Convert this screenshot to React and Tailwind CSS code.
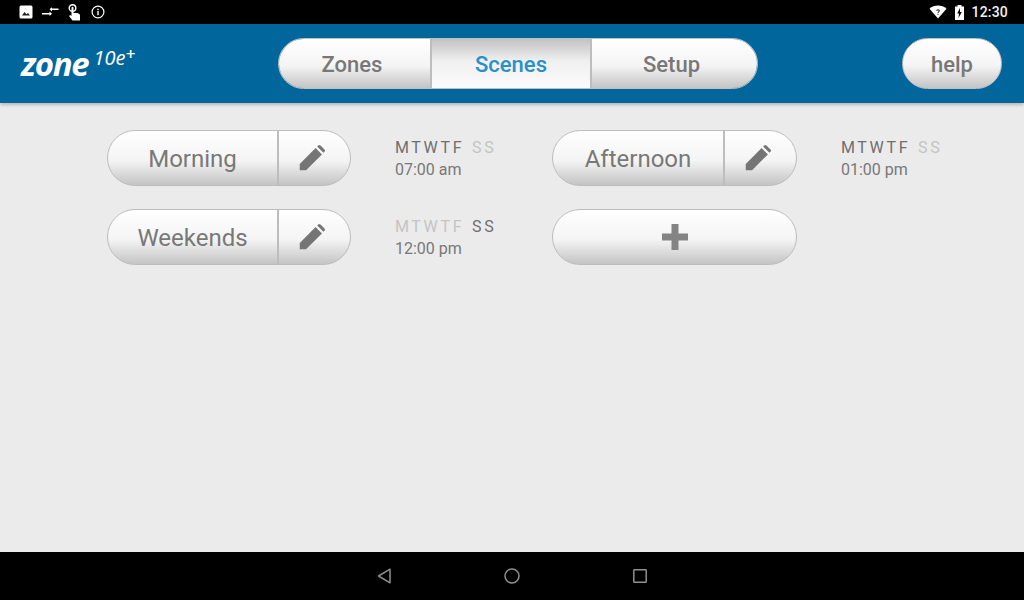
import React from "react";

const FONT = "font-['Roboto','Liberation_Sans',sans-serif]";
const pill = "bg-gradient-to-b from-[#ffffff] via-[#f4f4f4] via-55% to-[#c4c4c4]";

function Pencil() {
  return (
    <svg width="28" height="28" viewBox="0 0 24 24" fill="#757575">
      <path d="M1.500 22.500v-5.400l13.600-13.600 5.400 5.400L6.900 22.500z" />
      <path d="M16.400 2.200l.9-.9a1.400 1.400 0 0 1 2 0l3.400 3.400a1.400 1.400 0 0 1 0 2l-.9.9z" />
    </svg>
  );
}

function Days({ on }) {
  const wk = on === "week" ? "text-[#6f6f6f]" : "text-[#c4c4c4]";
  const we = on === "weekend" ? "text-[#6f6f6f]" : "text-[#c4c4c4]";
  return (
    <div className="flex text-[16px] leading-[20px] tracking-[2.6px]">
      <span className={wk}>MTWTF</span>
      <span className={`${we} ml-[8px]`}>SS</span>
    </div>
  );
}

function Scene({ name, on, time, wide }) {
  return (
    <div className="flex items-start">
      <div className={`flex h-[56px] ${wide ? "w-[245px]" : "w-[244px]"} rounded-full border border-[#bdbdbd] overflow-hidden ${pill}`}>
        <div className={`${wide ? "w-[170px]" : "w-[169px]"} flex items-center justify-center pt-[1px] text-[24px] text-[#787878]`}>{name}</div>
        <div className="w-[2px] bg-[#bdbdbd]" />
        <div className="flex-1 flex items-center justify-center pr-[6px]"><Pencil /></div>
      </div>
      <div className="ml-[44px] pt-[8px]">
        <Days on={on} />
        <div className="text-[16px] leading-[22px] mt-[1px] text-[#787878]">{time}</div>
      </div>
    </div>
  );
}

export default function App() {
  return (
    <div className={`w-[1024px] h-[600px] flex flex-col bg-[#ebebeb] overflow-hidden ${FONT}`}>
      <div className="h-[24px] bg-black flex items-center text-white shrink-0 pl-[19px] pr-[16px]">
        <svg width="14" height="14" viewBox="0 0 14 14"><rect x="0.500" y="0.500" width="13" height="13" rx="1.500" fill="#fff" /><path d="M3 10.500l2.500-3.500 2 2.200L9 8l2 2.500z" fill="#222" /></svg>
        <svg className="ml-[9px]" width="17" height="14" viewBox="0 0 17 14" fill="#fff"><path d="M0 8h7.500V6.600l2.500 2.200-2.500 2.200V9.400H0z" /><path d="M16.500 3.500H10V2.200L7.500 4.300 10 6.400V5h6.500z" /></svg>
        <svg className="ml-[9px]" width="12" height="17" viewBox="0 0 12 17" fill="#fff">
          <circle cx="4.500" cy="4" r="3.300" fill="none" stroke="#fff" strokeWidth="1.400" />
          <path d="M3.500 3.800a1 1 0 0 1 2 0V9h1.500c2.500 0 5 .6 5 2.500V16.500H4.500L1 12l1.200-1 1.300 1z" />
        </svg>
        <svg className="ml-[11px]" width="14" height="14" viewBox="0 0 14 14"><circle cx="7" cy="7" r="5.900" fill="none" stroke="#fff" strokeWidth="1.200" /><rect x="6.300" y="6" width="1.400" height="4.200" fill="#fff" /><rect x="6.300" y="3.700" width="1.400" height="1.400" fill="#fff" /></svg>
        <div className="flex-1" />
        <svg width="18" height="14" viewBox="0 0 18 14"><path d="M0.500 3.700C5 -0.600 13 -0.600 17.500 3.700L9 13.500z" fill="#fff" /><path d="M9 4.200a1.700 1.700 0 0 0-1.700 1.700h1c0-.9 1.400-.9 1.400 0 0 .7-1.200.9-1.200 2.100h1c0-.9 1.300-1.200 1.300-2.200A1.700 1.700 0 0 0 9 4.200zM8.500 8.700h1v1h-1z" fill="#222" /></svg>
        <svg className="ml-[8px]" width="9" height="15" viewBox="0 0 9 15"><path d="M2.500 0h4v1.500H9V15H0V1.500h2.500z" fill="#fff" /><path d="M5 3L2.200 8.500H4L3.500 13 6.800 7H5z" fill="#000" /></svg>
        <span className="ml-[7px] text-[14px] font-medium tracking-[0.2px] text-[#f2f2f2]">12:30</span>
      </div>

      <header className="h-[79px] bg-[#01669c] shrink-0 flex items-center shadow-[0_2px_3px_rgba(0,0,0,0.22)] relative">
        <div className="w-[278px] pl-[21px] flex items-start text-white italic font-['Open_Sans',sans-serif] font-bold">
          <span className="text-[33px] leading-[36px] tracking-[-1.3px] mt-[1px]">zone</span>
          <span className="text-[20px] leading-[22px] ml-[5px] mt-[2px] font-normal">10e</span>
          <span className="text-[17px] leading-[16px] mt-[1px] font-semibold">+</span>
        </div>
        <nav className="flex h-[51px] w-[480px] rounded-full border border-[#c0c0c0] overflow-hidden text-[22px] font-medium text-[#787878]">
          <div className={`w-[151px] flex items-center justify-center pt-[1px] pr-[5px] ${pill}`}>Zones</div>
          <div className="w-[162px] flex items-center justify-center pt-[1px] border-x-2 border-[#bdbdbd] text-[#2a90c8] bg-gradient-to-b from-[#c2c2c2] via-[#f0f0f0] via-45% to-[#fbfbfb]">Scenes</div>
          <div className={`flex-1 flex items-center justify-center pt-[1px] pr-[6px] ${pill}`}>Setup</div>
        </nav>
        <div className={`ml-[144px] h-[51px] w-[100px] rounded-full border border-[#c0c0c0] flex items-center justify-center pt-[1px] text-[22px] font-medium text-[#787878] ${pill}`}>help</div>
      </header>

      <main className="flex-1 pl-[107px] pt-[27px] grid grid-cols-[445px_1fr] auto-rows-[56px] gap-y-[23px] content-start">
        <Scene name="Morning" on="week" time="07:00 am" />
        <Scene name="Afternoon" on="week" time="01:00 pm" wide />
        <Scene name="Weekends" on="weekend" time="12:00 pm" />
        <div className={`h-[56px] w-[245px] rounded-full border border-[#bdbdbd] flex items-center justify-center pb-[1px] ${pill}`}>
          <svg width="26" height="26" viewBox="0 0 26 26" fill="#848484"><path d="M9.500 0h7v9.500H26v7h-9.500V26h-7v-9.500H0v-7h9.500z" /></svg>
        </div>
      </main>

      <footer className="h-[48px] bg-black shrink-0 flex items-center justify-center relative">
        <div className="flex items-center">
          <svg width="14" height="16" viewBox="0 0 14 16" fill="none" stroke="#8f8f8f" strokeWidth="1.500"><path d="M13 1.200v13.600L1.500 8z" strokeLinejoin="round" /></svg>
          <svg className="ml-[113px]" width="16" height="16" viewBox="0 0 16 16" fill="none" stroke="#8f8f8f" strokeWidth="1.500"><circle cx="8" cy="8" r="7" /></svg>
          <svg className="ml-[113px]" width="14" height="14" viewBox="0 0 14 14" fill="none" stroke="#8f8f8f" strokeWidth="1.500"><rect x="0.800" y="0.800" width="12.400" height="12.400" rx="0.500" /></svg>
        </div>
      </footer>
    </div>
  );
}
